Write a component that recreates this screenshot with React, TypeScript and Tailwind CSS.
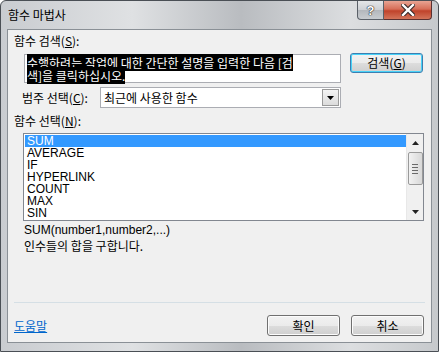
import React from "react";

const font = { fontFamily: '"Noto Sans CJK KR", "Liberation Sans", sans-serif' };
const latin = { fontFamily: '"Liberation Sans", "Noto Sans CJK KR", sans-serif' };

const functions = ["SUM", "AVERAGE", "IF", "HYPERLINK", "COUNT", "MAX", "SIN"];

function Btn({ children, focused = false, className = "" }: { children: React.ReactNode; focused?: boolean; className?: string }) {
  return (
    <div
      className={`flex items-center justify-center rounded-[3px] border text-[12px] leading-none text-black ${
        focused ? "border-[#3c7fb1] shadow-[inset_0_0_0_1px_#48d2f8]" : "border-[#707070] shadow-[inset_0_0_0_1px_#fcfcfc]"
      } bg-[linear-gradient(#f2f2f2_0%,#ebebeb_50%,#dddddd_51%,#cfcfcf_100%)] ${className}`}
    >
      {children}
    </div>
  );
}

export default function App() {
  return (
    <div className="w-[439px] h-[352px] overflow-hidden bg-white" style={font}>
      <div className="w-[439px] h-[352px] flex flex-col rounded-t-[6px] border border-[#4a4f55] bg-[linear-gradient(90deg,#c9ccd0_0%,#dfe1e3_30%,#b9bcc0_55%,#dcdee0_80%,#c6c9cc_100%)]">
        {/* Title bar */}
        <div className="h-[28px] flex items-start shrink-0">
          <div className="pl-[7px] pt-[6px] text-[12px] leading-[16px] text-black">함수 마법사</div>
          <div className="ml-auto mr-[6px] flex">
            <div className="w-[27px] h-[19px] rounded-bl-[4px] border border-t-0 border-[#5a6068] bg-[linear-gradient(#e4e6e8_0%,#cdd0d4_50%,#b3b7bc_51%,#c8ccd0_100%)] flex items-center justify-center">
              <span className="text-[13px] font-bold leading-none text-white [text-shadow:0_0_1px_#222,0_0_1px_#222,0_0_1px_#222]" style={latin}>?</span>
            </div>
            <div className="w-[48px] h-[19px] rounded-br-[4px] border border-l-0 border-t-0 border-[#5a3030] bg-[linear-gradient(#e8a493_0%,#d66e58_45%,#c0432b_55%,#d3745a_100%)] flex items-center justify-center">
              <svg width="14" height="12" viewBox="0 0 14 12">
                <path d="M2 1 L12 11 M12 1 L2 11" stroke="#3a2a2a" strokeWidth="4.5" strokeLinecap="square" />
                <path d="M2 1 L12 11 M12 1 L2 11" stroke="#ffffff" strokeWidth="2.4" strokeLinecap="square" />
              </svg>
            </div>
          </div>
        </div>

        {/* Client area */}
        <div className="mx-[6px] h-[314px] border border-[#8a9096] bg-[#f0f0f0] flex flex-col text-[12px] text-black">
          <div className="pl-[6px] pt-[3px] leading-[16px]">
            함수 검색(<span className="underline">S</span>):
          </div>
          <div className="flex items-start mt-[5px] pl-[16px]">
            <div className="w-[317px] h-[29px] border border-[#abadb3] bg-white pl-[2px] pt-[1px] text-[12px] leading-[13px]">
              <span className="bg-black text-white">수행하려는 작업에 대한 간단한 설명을 입력한 다음 [검</span>
              <br />
              <span className="bg-black text-white">색]을 클릭하십시오.</span>
            </div>
            <Btn focused className="ml-[9px] -mt-[1px] w-[73px] h-[20px]">
              검색(<span className="underline">G</span>)
            </Btn>
          </div>
          <div className="flex items-center mt-[4px] pl-[14px]">
            <div className="w-[78px] leading-[16px]">
              범주 선택(<span className="underline">C</span>):
            </div>
            <div className="w-[241px] h-[21px] border border-[#abadb3] bg-white flex items-center">
              <span className="pl-[3px] flex-1 leading-[16px]">최근에 사용한 함수</span>
              <div className="w-[17px] h-[17px] mr-[1px] border border-[#9a9a9a] bg-[linear-gradient(#f4f4f4,#dcdcdc)] flex items-center justify-center">
                <svg width="7" height="4" viewBox="0 0 7 4">
                  <path d="M0 0 H7 L3.5 4 Z" fill="#000" />
                </svg>
              </div>
            </div>
          </div>
          <div className="pl-[6px] mt-[5px] leading-[16px]">
            함수 선택(<span className="underline">N</span>):
          </div>
          <div className="ml-[15px] mt-[4px] w-[401px] h-[88px] border border-[#828790] bg-white flex">
            <div className="flex-1 pt-[1px] pl-[1px]" style={latin}>
              {functions.map((f, i) => (
                <div
                  key={f}
                  className={`h-[12px] pl-[2px] text-[12px] leading-[12px] ${i === 0 ? "bg-[#3399ff] text-white" : "text-black"}`}
                >
                  {f}
                </div>
              ))}
            </div>
            <div className="w-[17px] bg-[#f0f0f0] flex flex-col items-center border-l border-[#e8e8e8]">
              <div className="h-[17px] flex items-center justify-center">
                <svg width="7" height="4" viewBox="0 0 7 4">
                  <path d="M0 4 H7 L3.5 0 Z" fill="#222" />
                </svg>
              </div>
              <div className="w-[15px] h-[33px] mt-[1px] rounded-[2px] border border-[#9a9a9a] bg-[linear-gradient(90deg,#f2f2f2,#d8d8d8)] flex flex-col items-center justify-center gap-[2px]">
                <div className="w-[6px] h-px bg-[#6a6a6a]" />
                <div className="w-[6px] h-px bg-[#6a6a6a]" />
                <div className="w-[6px] h-px bg-[#6a6a6a]" />
                <div className="w-[6px] h-px bg-[#6a6a6a]" />
              </div>
              <div className="mt-auto h-[17px] flex items-center justify-center">
                <svg width="7" height="4" viewBox="0 0 7 4">
                  <path d="M0 0 H7 L3.5 4 Z" fill="#222" />
                </svg>
              </div>
            </div>
          </div>
          <div className="pl-[16px] mt-[1px] leading-[16px]" style={latin}>
            SUM(number1,number2,...)
          </div>
          <div className="pl-[16px] leading-[16px]">인수들의 합을 구합니다.</div>
          <div className="mx-[6px] mt-[48px] h-px bg-[#d5dfe5]" />
          <div className="flex items-center mt-[12px] pl-[6px] pr-[7px]">
            <span className="text-[#0066cc] underline leading-[16px]">도움말</span>
            <Btn className="ml-auto w-[73px] h-[21px]">확인</Btn>
            <Btn className="ml-[11px] w-[73px] h-[21px]">취소</Btn>
          </div>
        </div>
      </div>
    </div>
  );
}
